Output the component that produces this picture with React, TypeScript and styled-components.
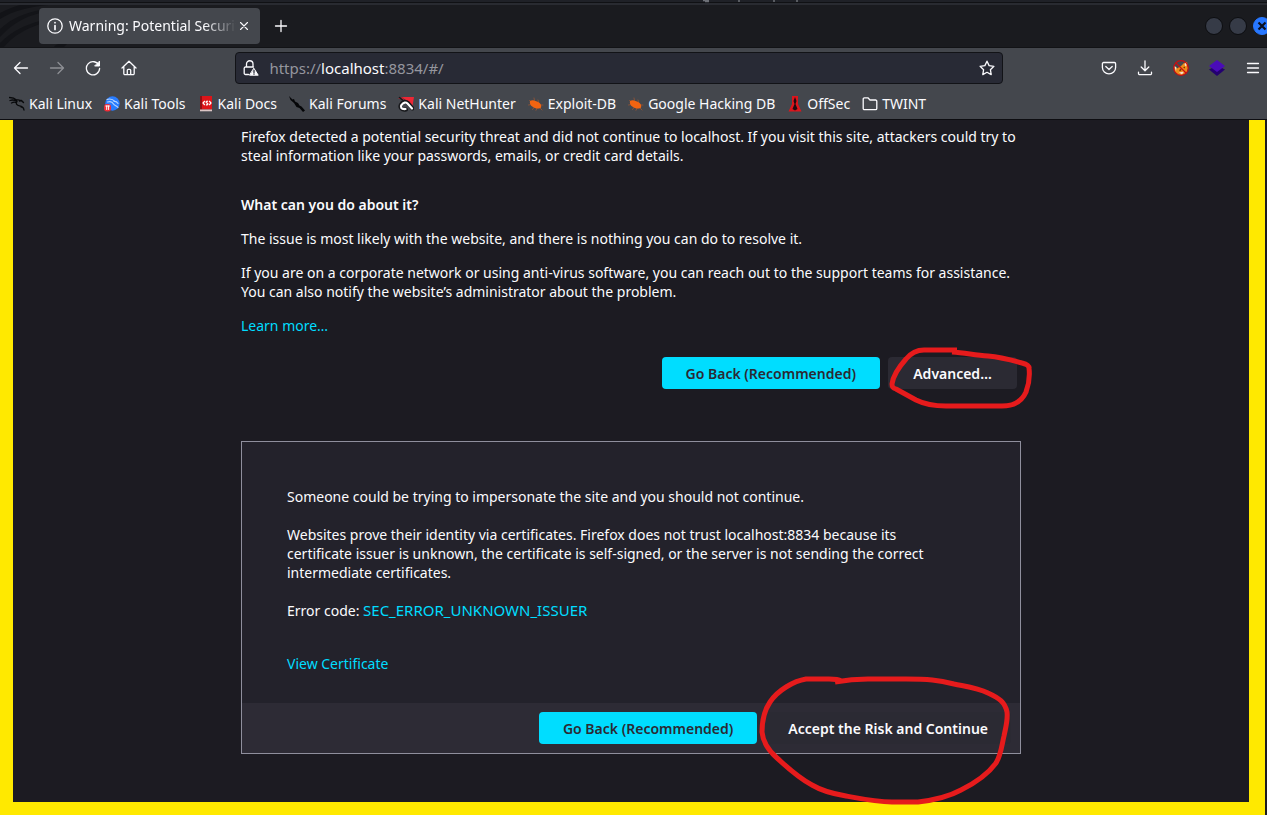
import React from 'react';
import styled, { createGlobalStyle } from 'styled-components';

const Global = createGlobalStyle`
  *, *::before, *::after { box-sizing: border-box; }
  body { margin: 0; background: #1c1b22; }
  body, button { font-family: 'Noto Sans', sans-serif; font-size: 14px; line-height: 19px; color: #fbfbfe; }
  button { cursor: pointer; border: 0; }
  svg { display: block; flex: none; }
`;

const Window = styled.div`
  min-height: 100vh;
  display: flex;
  flex-direction: column;
  overflow: hidden;
`;

const Desktop = styled.div`
  height: 5px;
  padding-left: 225px;
  background: #1f2127;
  border-bottom: 2px solid #292b31;
  box-shadow: inset 0 -1px 0 #101114;
  display: flex;
  justify-content: center;
  overflow: hidden;
`;

const TabStrip = styled.div`
  position: relative;
  height: 43px;
  display: flex;
  align-items: center;
  padding-left: 39px;
  background: #1a1b1f;
  border-bottom: 1px solid #121316;
`;

const Wallpaper = styled.svg`
  position: absolute;
  left: 0;
  top: 0;
`;

const Tab = styled.div`
  position: relative;
  width: 221px;
  height: 36px;
  margin-bottom: 1px;
  padding: 0 8px;
  display: flex;
  align-items: center;
  gap: 6px;
  border-radius: 4px;
  background: #44474d;
`;

const TabTitle = styled.span`
  flex: 1;
  min-width: 0;
  overflow: hidden;
  white-space: nowrap;
  line-height: 24px;
  mask-image: linear-gradient(to left, transparent, #000 32px);
`;

const IconButton = styled.button<{ $w?: number; $dim?: boolean }>`
  width: ${p => p.$w ?? 36}px;
  height: 32px;
  padding: 0;
  display: flex;
  flex: none;
  align-items: center;
  justify-content: center;
  background: none;
  opacity: ${p => (p.$dim ? 0.4 : 1)};
`;

const TabClose = styled(IconButton)`
  margin-left: -6px;
`;

const NewTab = styled(IconButton)`
  margin-left: 3px;
`;

const WindowControls = styled.div`
  display: flex;
  gap: 6px;
  margin-left: auto;
  margin-right: -4px;
`;

const WindowControl = styled.button<{ $close?: boolean }>`
  width: 18px;
  height: 18px;
  padding: 0;
  display: grid;
  place-items: center;
  border: 1px solid ${p => (p.$close ? '#2777ff' : '#0c0d10')};
  border-radius: 50%;
  background: ${p => (p.$close ? '#2777ff' : '#363b47')};
`;

const NavBar = styled.nav`
  height: 40px;
  display: flex;
  align-items: center;
  margin-right: -4px;
  padding-left: 3px;
  background: #44474d;
`;

const Spring = styled.div`
  flex: 2 1 0;
`;

const UrlBar = styled.div`
  flex: 17 1 0;
  height: 32px;
  display: flex;
  align-items: center;
  padding: 0 7px;
  border: 1px solid #121317;
  border-radius: 4px;
  background: #282a35;
`;

const Address = styled.a`
  flex: 1;
  margin-left: 10px;
  font-size: 15px;
  color: #95969e;
  text-decoration: none;
  strong { color: #fbfbfe; font-weight: 400; }
`;

const Bookmarks = styled.div`
  height: 32px;
  display: flex;
  align-items: center;
  gap: 12px;
  padding-left: 9px;
  background: #44474d;
  border-bottom: 1px solid #0d0d11;
`;

const Bookmark = styled.a`
  display: flex;
  align-items: center;
  gap: 4px;
  color: #fbfbfe;
  text-decoration: none;
  white-space: nowrap;
`;

const Page = styled.main`
  flex: 1;
  margin-right: 2px;
  padding: 7px 0 48px;
  border: solid #ffe900;
  border-width: 0 16px 13px 13px;
  background: #1c1b22;
`;

const Container = styled.div`
  width: 100%;
  max-width: 780px;
  margin: 0 auto;
`;

const Heading = styled.h2`
  margin: 30px 0 15px;
  font-size: 14px;
  line-height: 19px;
  font-weight: 600;
`;

const Text = styled.p<{ $gap?: number }>`
  margin: 0 0 ${p => p.$gap ?? 15}px;
`;

const Link = styled.a`
  color: #00ddff;
  text-decoration: none;
`;

const ErrorCode = styled(Link)`
  font-size: 15px;
`;

const Actions = styled.div<{ $footer?: boolean }>`
  display: flex;
  flex-wrap: wrap;
  justify-content: flex-end;
  gap: 8px;
  padding: ${p => (p.$footer ? '9px' : '0 4px')};
  background: ${p => (p.$footer ? '#2d2b35' : 'none')};
`;

const ActionButton = styled.button<{ $primary?: boolean }>`
  position: relative;
  min-width: 129px;
  height: 32px;
  padding: 0 ${p => (p.$primary ? 24 : 23)}px;
  border-radius: 4px;
  font-weight: 600;
  color: ${p => (p.$primary ? '#2b2a33' : '#fbfbfe')};
  background: ${p => (p.$primary ? '#00ddff' : '#2b2a33')};
`;

const Marker = styled.svg<{ $right: number; $top: number }>`
  position: absolute;
  right: ${p => p.$right}px;
  top: ${p => p.$top}px;
  pointer-events: none;
`;

const AdvancedPanel = styled.section`
  margin-top: 52px;
  border: 1px solid #8f8f9d;
  background: #23222b;
`;

const PanelBody = styled.div`
  padding: 45px 88px 30px 45px;
`;

const stroke = { fill: 'none', stroke: '#fbfbfe', strokeWidth: 1.3, strokeLinecap: 'round', strokeLinejoin: 'round' } as const;

const Icon = ({ children, size = 16 }: { children: React.ReactNode; size?: number }) => (
  <svg width={size} height={size} viewBox="0 0 16 16" aria-hidden="true" {...stroke}>{children}</svg>
);

const Bug = () => (
  <Icon>
    <g stroke="#a8572f" strokeWidth="0.7">
      <path d="M1.500 4.500l2 1.500M6 2l.5 2.500M.5 9l3-.5M10 4l.5 2M15 9h-3M4.500 13.500l2-2.500M8 14.300l1-2M14 14l-2-2" />
    </g>
    <path d="M2 5C4 3.500 6 4.300 9 5.500S14 9 13 11.500c-1.500 1.800-5 1.200-8-.5S1.500 7 2 5z" fill="#f26411" stroke="none" />
  </Icon>
);

const bookmarks: [string, React.ReactNode][] = [
  ['Kali Linux', (
    <Icon key="i"><g stroke="#08090b" strokeWidth="1.3">
      <path d="M.5 1.500c3 0 5 .5 7 2.500M1 4.500c3-1 5-.5 7 1M2.500 7c2-1 4-.8 5-.2M7.500 4c2.500-.5 5 .3 7 2.500M10.500 5l2-.5 2 2M7.500 5c-1 3 .5 4.500 3 4.800s4 1 4.500 4.200M12 11l2.500 1" />
    </g></Icon>
  )],
  ['Kali Tools', (
    <Icon key="i">
      <circle cx="8.500" cy="7.500" r="7.200" fill="#287cff" stroke="none" />
      <path d="M3 3.500c3-1 6 0 8 2M3.500 6c3-1 5 0 6 2s3 1.500 4.500 3.500M10 5.500c2-.5 3 .5 4 2" stroke="#b8d6ff" strokeWidth="1.100" />
      <rect x="0" y="8" width="7" height="7.500" rx="3" fill="#ee2d37" stroke="none" />
      <path d="M1.800 10h3.600M2.700 10v3.500M4.600 10v3.500" stroke="#fff" strokeWidth="1" />
    </Icon>
  )],
  ['Kali Docs', (
    <svg key="i" width="16" height="16" viewBox="0 0 16 16" aria-hidden="true">
      <path d="M2 0h12v13.500H2z" fill="#dd1519" /><path d="M2 0h2v14H2z" fill="#8f0f14" /><path d="M2 13.500h12v1.800H2z" fill="#dcc6c5" />
      <path d="M6.800 5L5 7l1.800 2M11.200 5L13 7l-1.800 2M10 5.500C8 4.500 7.500 6.500 9 7s1 2.500-1 1.600" fill="none" stroke="#fff" strokeWidth="1.200" />
    </svg>
  )],
  ['Kali Forums', (
    <Icon key="i"><path d="M0 0l3.500 3.500L5 3l1 2.500L9 7l1.500 2.500 2 1 3.500 4-2 1.500-3.500-4-3-1-2.500-4L1.500 4z" fill="#050608" stroke="none" /></Icon>
  )],
  ['Kali NetHunter', (
    <Icon key="i">
      <path d="M4 1h12L14.500 10z" fill="#ee2735" stroke="none" />
      <path d="M0 2.500l5-1.500 1 3z" fill="#c91f2b" stroke="none" />
      <path d="M1.500 1.500l3 2.500" stroke="#17181b" strokeWidth="1.500" />
      <path d="M8 13.500C3 14.500 1.500 11 3 8.500 5 5 8 5 10 7l4.500 5.500" stroke="#17181b" strokeWidth="4" />
      <path d="M7.500 13C3 13.500 2 11 3.500 9 5.500 6 8 6 9.500 7.500l4.500 5" stroke="#fff" strokeWidth="2.200" />
    </Icon>
  )],
  ['Exploit-DB', <Bug key="i" />],
  ['Google Hacking DB', <Bug key="i" />],
  ['OffSec', (
    <svg key="i" width="16" height="16" viewBox="0 0 16 16" aria-hidden="true">
      <path d="M5 0h6v8l3.500 7.500h-13L5 8z" fill="#dc151c" />
      <path d="M8 1L6.500 5l1 3-2 5 2.500 1.500L10.500 13l-2-5 1-3z" fill="#200a10" />
    </svg>
  )],
  ['TWINT', <Icon key="i"><path d="M1.200 3a1.200 1.200 0 0 1 1.200-1.200h3.500L8 4h5.600a1.200 1.200 0 0 1 1.200 1.200v7.300a1.200 1.200 0 0 1-1.200 1.200H2.400a1.200 1.200 0 0 1-1.200-1.200z" /></Icon>],
];

export default function App() {
  return (
    <Window>
      <Global />
      <header>
        <Desktop>
          <svg width="144" height="3" viewBox="0 0 144 3" aria-hidden="true">
            <path d="M29 .5h6M31 1.500h4M65 0v2M100 0v2M123 0v2" stroke="#6d7077" strokeWidth="1.500" />
          </svg>
        </Desktop>
        <TabStrip>
          <Wallpaper width="72" height="42" viewBox="0 0 72 42" aria-hidden="true">
            <path d="M0 14C14 5 30 2 48 0H20C12 2 6 5 0 8z" fill="#121317" />
            <path d="M0 24C12 13 25 8 40 5v3C24 12 12 19 0 32z" fill="#131418" />
            <path d="M0 38C12 26 25 20 40 16v3C26 24 14 30 4 42H0z" fill="#131418" />
            <path d="M54 42c2-3 6-4 14-4l-4 4z" fill="#121317" />
          </Wallpaper>
          <Tab>
            <Icon><circle cx="8" cy="8" r="7.200" /><path d="M8 7.500v4M8 4.500v.2" strokeWidth="1.700" /></Icon>
            <TabTitle>Warning: Potential Security</TabTitle>
            <TabClose $w={16} aria-label="Close tab"><Icon size={14}><path d="M4 4l8 8M12 4l-8 8" /></Icon></TabClose>
          </Tab>
          <NewTab aria-label="New tab"><Icon><path d="M8 2.500v11M2.500 8h11" /></Icon></NewTab>
          <WindowControls>
            <WindowControl aria-label="Minimize" />
            <WindowControl aria-label="Maximize" />
            <WindowControl $close aria-label="Close window">
              <svg width="10" height="10" viewBox="0 0 10 10" aria-hidden="true"><path d="M1.500 1.500l7 7M8.500 1.500l-7 7" stroke="#0b1020" strokeWidth="2.200" /></svg>
            </WindowControl>
          </WindowControls>
        </TabStrip>
        <NavBar>
          <IconButton aria-label="Back"><Icon><path d="M14.500 8H1.500M7 2.500L1.500 8 7 13.500" /></Icon></IconButton>
          <IconButton $dim aria-label="Forward"><Icon><path d="M1.500 8h13M9 2.500L14.500 8 9 13.500" /></Icon></IconButton>
          <IconButton aria-label="Reload"><Icon><path d="M14 5.500A6.600 6.600 0 1 0 14.600 8.500" /><path d="M14.500 1.500v4.500H10z" fill="#fbfbfe" strokeWidth="1" /></Icon></IconButton>
          <IconButton aria-label="Home"><Icon><path d="M1 8l7-6.800L15 8M2.800 6.500v7a1.200 1.200 0 0 0 1.200 1.200h8a1.200 1.200 0 0 0 1.200-1.200v-7M6.300 14.500V10.300a1 1 0 0 1 1-1h1.400a1 1 0 0 1 1 1v4.200" /></Icon></IconButton>
          <Spring />
          <UrlBar>
            <Icon>
              <path d="M3.500 7V4a3 3 0 0 1 6.500 0v3M5.500 14.500H2.500A1.300 1.300 0 0 1 1.200 13.200V8.300A1.300 1.300 0 0 1 2.500 7h8" />
              <path d="M11 8.500l4.200 6.700H6.800z" fill="#fbfbfe" strokeWidth="1" /><path d="M11 10.500v2M11 14v.2" stroke="#282a35" strokeWidth="1.300" />
            </Icon>
            <Address href="#/">https://<strong>localhost</strong>:8834/#/</Address>
            <Icon><path d="M8 1.200l2.100 4.400 4.800.7-3.500 3.400.8 4.900L8 12.300l-4.200 2.300.8-4.900L1.100 6.300l4.800-.7z" /></Icon>
          </UrlBar>
          <Spring />
          <IconButton aria-label="Save to Pocket"><Icon><path d="M2.600 2.500h10.800a1.200 1.200 0 0 1 1.200 1.200V7.500a6.600 6.300 0 0 1-13.200 0V3.700a1.200 1.200 0 0 1 1.200-1.200zM4.800 6.500L8 9.500l3.200-3" /></Icon></IconButton>
          <IconButton aria-label="Downloads"><Icon><path d="M8 .8v9.700M4.200 7L8 10.700 11.800 7M1.500 12.200v1.300a1.200 1.200 0 0 0 1.200 1.200h10.600a1.200 1.200 0 0 0 1.200-1.200v-1.300" /></Icon></IconButton>
          <IconButton aria-label="FoxyProxy">
            <Icon>
              <path d="M11 3l3-1 1 6-1.500 5-4 2H5L1.500 11 1 6l3 2.500L8 6z" fill="#ef8b19" stroke="none" />
              <path d="M1 5.500l2.500 2L3 11zM12.500 2.500l1.500 1-1 3-1.500-1.500zM6 12.500l5-1-2 3z" fill="#f4ded0" stroke="none" />
              <path d="M6 10l2-1.500.5 1.500L7 11.500zM10 7.500l2-1v2z" fill="#7a3508" stroke="none" />
              <circle cx="8" cy="8" r="7.300" stroke="#c90d12" strokeWidth="1.200" /><path d="M3 3l10 10" stroke="#c90d12" strokeWidth="1.200" />
            </Icon>
          </IconButton>
          <IconButton aria-label="Wappalyzer">
            <Icon><path d="M0 9.500l3-1.500h10l3 1.500L8 16z" fill="#240070" stroke="none" /><path d="M8 0l8 6L8 12 0 6z" fill="#4a0bb8" stroke="none" /></Icon>
          </IconButton>
          <IconButton aria-label="Menu"><Icon><path d="M2.500 3.500h11M2.500 8h11M2.500 12.500h11" /></Icon></IconButton>
        </NavBar>
        <Bookmarks>
          {bookmarks.map(([label, icon]) => <Bookmark key={label} href="#">{icon}{label}</Bookmark>)}
        </Bookmarks>
      </header>
      <Page>
        <Container>
          <Text>Firefox detected a potential security threat and did not continue to localhost. If you visit this site, attackers could try to steal information like your passwords, emails, or credit card details.</Text>
          <Heading>What can you do about it?</Heading>
          <Text>The issue is most likely with the website, and there is nothing you can do to resolve it.</Text>
          <Text>If you are on a corporate network or using anti-virus software, you can reach out to the support teams for assistance. You can also notify the website’s administrator about the problem.</Text>
          <Text $gap={22}><Link href="#">Learn more…</Link></Text>
          <Actions>
            <ActionButton $primary>Go Back (Recommended)</ActionButton>
            <ActionButton>
              Advanced…
              <Marker $right={-19} $top={-12} width="148" height="66" viewBox="888 345 148 66" fill="none" stroke="#e61b1c" strokeWidth="5" strokeLinejoin="round" aria-hidden="true">
                <path d="M957 350H924C916 350 911 353 906 359C898 368 893 376 892 384C892 387 893 388 896 389L916 400C924 404 934 406 946 406H1002C1015 406 1022 401 1026 392C1029 384 1030 376 1029 368C1029 365 1026 364 1022 363C1008 359 998 357 988 356C974 355 966 353 952 352" />
              </Marker>
            </ActionButton>
          </Actions>
          <AdvancedPanel>
            <PanelBody>
              <Text $gap={19}>Someone could be trying to impersonate the site and you should not continue.</Text>
              <Text $gap={19}>Websites prove their identity via certificates. Firefox does not trust localhost:8834 because its certificate issuer is unknown, the certificate is self-signed, or the server is not sending the correct intermediate certificates.</Text>
              <Text $gap={34}>Error code: <ErrorCode href="#">SEC_ERROR_UNKNOWN_ISSUER</ErrorCode></Text>
              <Text $gap={0}><Link href="#">View Certificate</Link></Text>
            </PanelBody>
            <Actions $footer>
              <ActionButton $primary>Go Back (Recommended)</ActionButton>
              <ActionButton>
                Accept the Risk and Continue
                <Marker $right={-5} $top={-40} width="260" height="136" viewBox="756 672 260 136" fill="none" stroke="#e61b1c" strokeWidth="5" strokeLinejoin="round" aria-hidden="true">
                  <path d="M841 681C838 679 835 679 829 679H806C794 681 778 690 770 702C764 711 762 722 762 732C763 743 769 751 777 758C786 766 797 777 812 785C822 791 834 794 846 796C862 799 876 802 892 802H918C935 800 950 796 961 790C975 783 988 774 996 763C1001 755 1002 744 1004 736C1006 726 1008 720 1007 712C1005 702 999 698 988 693C978 688 969 687 954 684C938 680 928 679 906 679H868C856 679 846 680 835 682" />
                </Marker>
              </ActionButton>
            </Actions>
          </AdvancedPanel>
        </Container>
      </Page>
    </Window>
  );
}
